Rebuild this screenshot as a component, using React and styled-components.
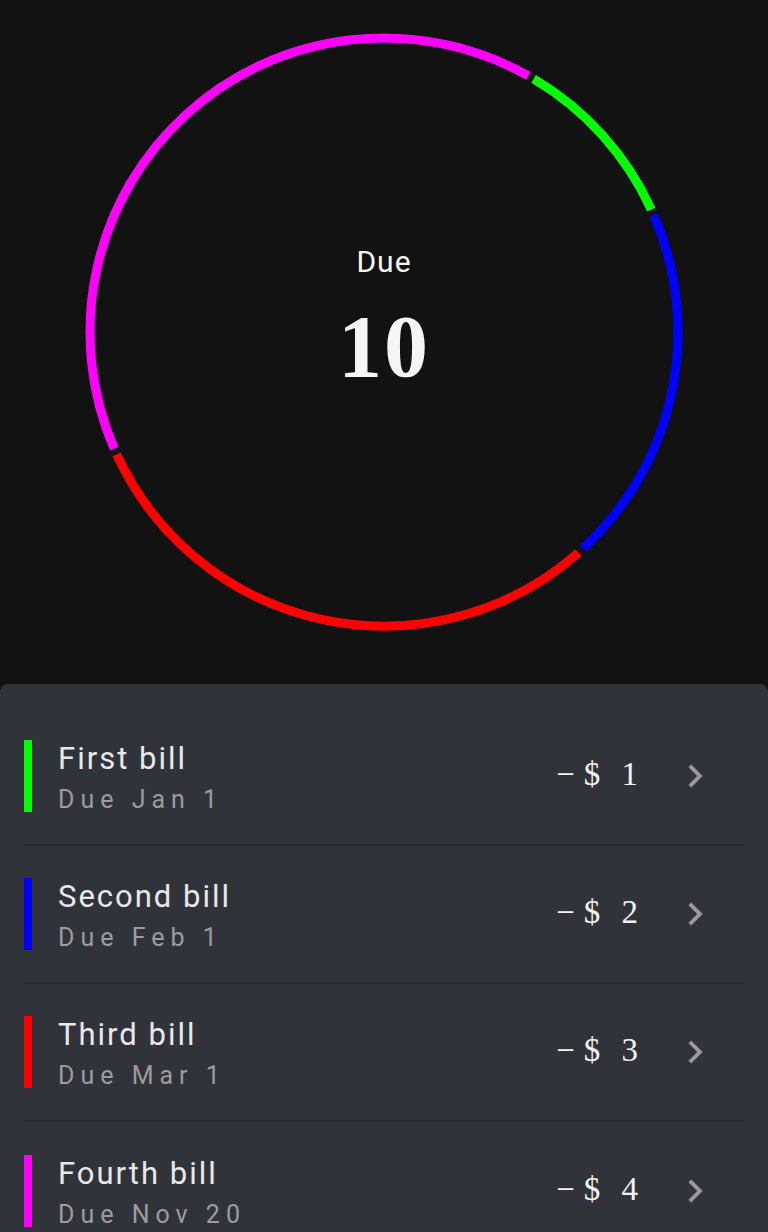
import React from 'react'
import styled, { createGlobalStyle } from 'styled-components'

const GlobalStyle = createGlobalStyle`
  html, body {
    margin: 0;
    padding: 0;
    overflow: hidden;
    background-color: #121212;
  }
  * {
    box-sizing: border-box;
  }
`

const bills = [
  { name: 'First bill', due: 'Due Jan 1', amount: 1, color: '#00ff00' },
  { name: 'Second bill', due: 'Due Feb 1', amount: 2, color: '#0000ff' },
  { name: 'Third bill', due: 'Due Mar 1', amount: 3, color: '#ff0000' },
  { name: 'Fourth bill', due: 'Due Nov 20', amount: 4, color: '#ff00ff' },
]

const SIZE = 610
const CENTER = SIZE / 2
const RADIUS = 294
const START = 30
const GAP = 1.2

const Page = styled.div`
  min-height: 100vh;
  background-color: #121212;
`

const ChartSection = styled.section`
  height: 684px;
  padding: 27px 0 47px;
  display: grid;
  justify-content: center;
`

const ChartStack = styled.div`
  display: grid;
  width: ${SIZE}px;
  height: ${SIZE}px;

  & > * {
    grid-area: 1 / 1;
  }
`

const CenterLabel = styled.div`
  display: flex;
  flex-direction: column;
  align-items: center;
  justify-content: center;
  padding-bottom: 26px;
  color: #f5f5f5;
`

const DueLabel = styled.div`
  font-family: Roboto, "Noto Sans", sans-serif;
  font-size: 30px;
  line-height: 30px;
  letter-spacing: 1px;
`

const DueTotal = styled.div`
  margin-top: 26px;
  font-family: "Liberation Serif", serif;
  font-weight: 700;
  font-size: 88px;
  line-height: 88px;
  letter-spacing: 2px;
`

const Panel = styled.section`
  background-color: #31333b;
  border-radius: 8px 8px 0 0;
  padding: 24px 24px 0;
`

const Row = styled.div`
  display: flex;
  align-items: center;
  height: 138px;
  padding: 32px 0;
  border-bottom: 2px solid #26282f;

  &:last-child {
    border-bottom: none;
  }
`

const ColorBar = styled.div`
  width: 8px;
  height: 72px;
  flex-shrink: 0;
  background-color: ${p => p.color};
`

const TextBlock = styled.div`
  display: flex;
  flex-direction: column;
  margin-left: 26px;
  padding-top: 3px;
`

const Title = styled.div`
  font-family: Roboto, "Noto Sans", sans-serif;
  font-size: 31px;
  line-height: 32px;
  letter-spacing: 2px;
  color: #e8e8e8;
`

const Subtitle = styled.div`
  margin-top: 13px;
  font-family: Roboto, "Noto Sans", sans-serif;
  font-size: 25px;
  line-height: 24px;
  letter-spacing: 6px;
  color: #9c9c9e;
`

const Amount = styled.div`
  margin-left: auto;
  padding-bottom: 4px;
  font-family: "Liberation Serif", serif;
  font-size: 33px;
  line-height: 34px;
  letter-spacing: 9px;
  word-spacing: -5px;
  color: #f2f2f2;
`

const Chevron = styled.svg`
  width: 46px;
  height: 46px;
  margin-left: 25px;
  margin-right: 26px;
  flex-shrink: 0;
  fill: #9a9a9a;
`

function point(deg) {
  const rad = (deg * Math.PI) / 180
  return [CENTER + RADIUS * Math.sin(rad), CENTER - RADIUS * Math.cos(rad)]
}

function arc(from, to) {
  const [x1, y1] = point(from)
  const [x2, y2] = point(to)
  const large = to - from > 180 ? 1 : 0
  return `M ${x1} ${y1} A ${RADIUS} ${RADIUS} 0 ${large} 1 ${x2} ${y2}`
}

const DonutChart = ({ items }) => {
  const total = items.reduce((sum, b) => sum + b.amount, 0)
  let angle = START
  return (
    <svg width={SIZE} height={SIZE} viewBox={`0 0 ${SIZE} ${SIZE}`}>
      {items.map(b => {
        const sweep = (b.amount / total) * 360
        const d = arc(angle + GAP / 2, angle + sweep - GAP / 2)
        angle += sweep
        return <path key={b.name} d={d} fill="none" stroke={b.color} strokeWidth="9" />
      })}
    </svg>
  )
}

const App = () => {
  const total = bills.reduce((sum, b) => sum + b.amount, 0)
  return (
    <Page>
      <GlobalStyle />
      <ChartSection>
        <ChartStack>
          <DonutChart items={bills} />
          <CenterLabel>
            <DueLabel>Due</DueLabel>
            <DueTotal>{total}</DueTotal>
          </CenterLabel>
        </ChartStack>
      </ChartSection>
      <Panel>
        {bills.map(b => (
          <Row key={b.name}>
            <ColorBar color={b.color} />
            <TextBlock>
              <Title>{b.name}</Title>
              <Subtitle>{b.due}</Subtitle>
            </TextBlock>
            <Amount>−$ {b.amount}</Amount>
            <Chevron viewBox="0 0 24 24">
              <path d="M10 6L8.59 7.41 13.17 12l-4.58 4.59L10 18l6-6z" />
            </Chevron>
          </Row>
        ))}
      </Panel>
    </Page>
  )
}

export default App
